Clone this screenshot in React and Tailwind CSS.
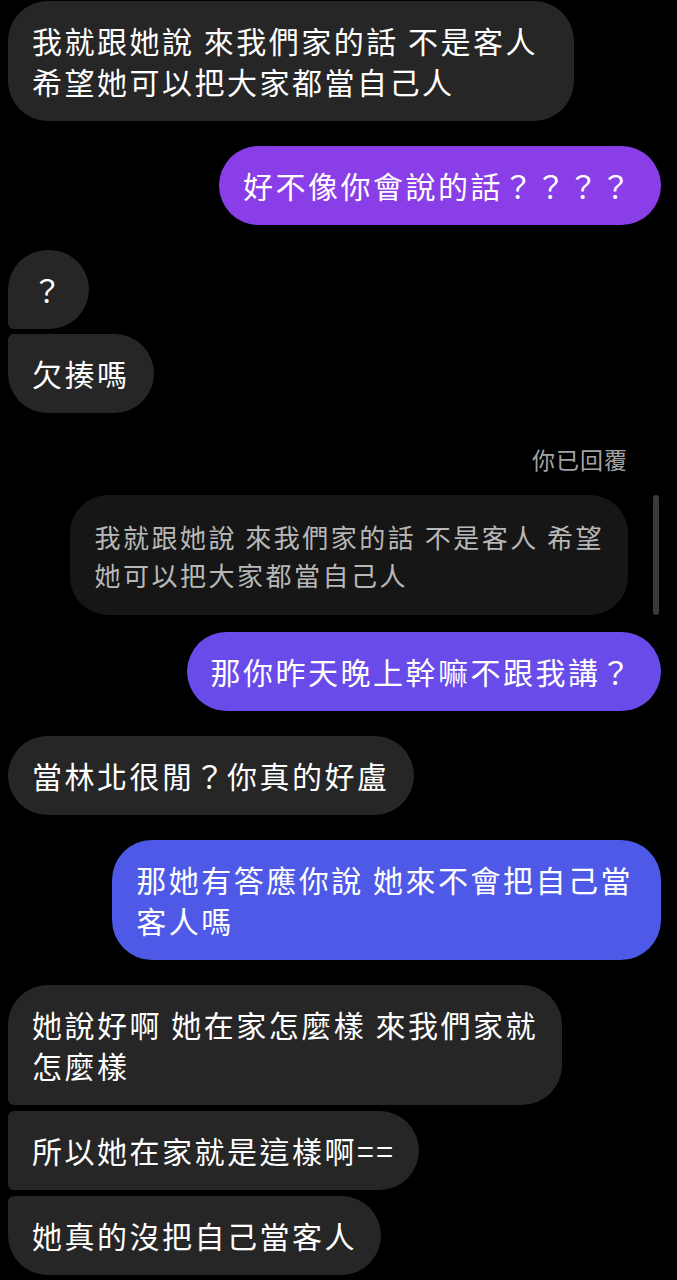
import React from 'react';

const font = { fontFamily: '"Noto Sans CJK TC", "Noto Sans", sans-serif' };

// corner shapes for grouped incoming messages
const CORNERS = {
  single: 'rounded-[40px]',
  first: 'rounded-[40px] rounded-bl-[6px]',
  middle: 'rounded-[40px] rounded-tl-[6px] rounded-bl-[6px]',
  last: 'rounded-[40px] rounded-tl-[6px]',
};

const Incoming = ({ lines, pos = 'single', className = '' }) => (
  <div className={`flex justify-start ${className}`}>
    <div
      className={`bg-[#262626] text-white text-[30px] leading-[41px] tracking-[2.5px] pl-6 pr-6 py-[19px] whitespace-nowrap ${CORNERS[pos]}`}
    >
      {lines.map((l, i) => (
        <div key={i}>{l}</div>
      ))}
    </div>
  </div>
);

const Outgoing = ({ lines, color, className = '' }) => (
  <div className={`flex justify-end ${className}`}>
    <div
      className={`${color} text-white text-[30px] leading-[41px] tracking-[2.5px] pl-6 pr-7 py-[19px] rounded-[40px] whitespace-nowrap`}
    >
      {lines.map((l, i) => (
        <div key={i}>{l}</div>
      ))}
    </div>
  </div>
);

export default function App() {
  return (
    <div className="min-h-[1280px] bg-black pl-2 pr-4 pt-[1px] overflow-hidden" style={font}>
      <Incoming
        lines={['我就跟她說 來我們家的話 不是客人', '希望她可以把大家都當自己人']}
        className="[&>div]:pr-9"
      />

      <Outgoing lines={['好不像你會說的話？？？？']} color="bg-[#8a3ee7]" className="mt-[25px]" />

      <Incoming lines={['？']} pos="first" className="mt-[25px]" />
      <Incoming lines={['欠揍嗎']} pos="last" className="mt-[5px]" />

      {/* reply context */}
      <div className="mt-[32px] flex justify-end pr-[33px]">
        <span className="text-[#a3a3a3] text-[23px] leading-[28px] tracking-[1px]">你已回覆</span>
      </div>
      <div className="mt-[22px] flex justify-end items-stretch gap-[25px] pr-[2px]">
        <div className="bg-[#161616] text-[#b8b8b8] text-[26px] leading-[38px] tracking-[2.5px] pl-[25px] pr-[24px] pt-[23px] pb-[21px] rounded-[38px] whitespace-nowrap">
          <div>我就跟她說 來我們家的話 不是客人 希望</div>
          <div>她可以把大家都當自己人</div>
        </div>
        <div className="w-[6px] rounded-full bg-[#3a3a3a]" />
      </div>

      <Outgoing lines={['那你昨天晚上幹嘛不跟我講？']} color="bg-[#684be8]" className="mt-[17px]" />

      <Incoming lines={['當林北很閒？你真的好盧']} className="mt-[25px]" />

      <Outgoing
        lines={['那她有答應你說 她來不會把自己當', '客人嗎']}
        color="bg-[#4e5ae7]"
        className="mt-[25px]"
      />

      <Incoming
        lines={['她說好啊 她在家怎麼樣 來我們家就', '怎麼樣']}
        pos="first"
        className="mt-[25px]"
      />
      <Incoming lines={['所以她在家就是這樣啊==']} pos="middle" className="mt-[6px]" />
      <Incoming lines={['她真的沒把自己當客人']} pos="last" className="mt-[6px]" />
    </div>
  );
}
